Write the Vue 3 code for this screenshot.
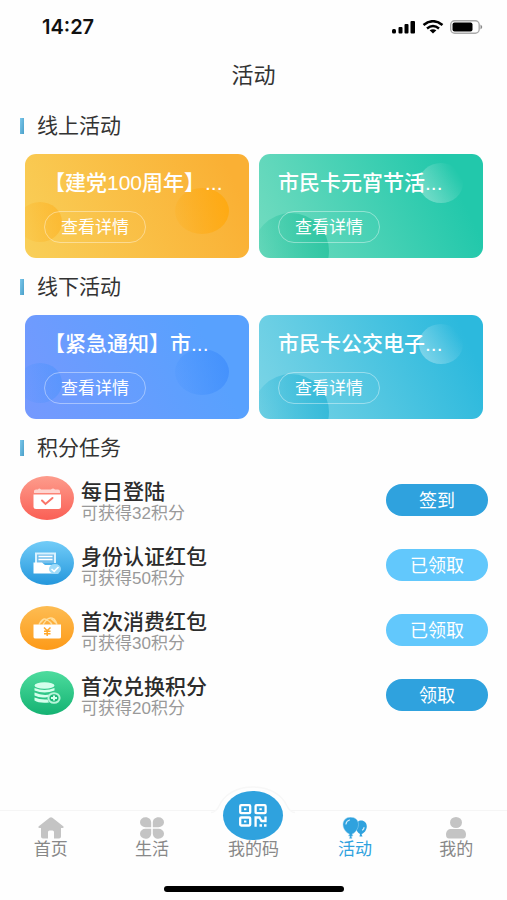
<script setup>
const sections = [
  {
    title: '线上活动',
    cards: [
      { title: '【建党100周年】...', theme: 'amber', shape: 'a' },
      { title: '市民卡元宵节活...', theme: 'green', shape: 'b' },
    ],
  },
  {
    title: '线下活动',
    cards: [
      { title: '【紧急通知】市...', theme: 'blue', shape: 'a' },
      { title: '市民卡公交电子...', theme: 'cyan', shape: 'b' },
    ],
  },
]

const tasks = [
  { icon: 'calendar', title: '每日登陆', points: 32, action: '签到', done: false, from: '#fd9c8c', to: '#fa5f55' },
  { icon: 'identity', title: '身份认证红包', points: 50, action: '已领取', done: true, from: '#72ccf8', to: '#2497dc' },
  { icon: 'bag', title: '首次消费红包', points: 30, action: '已领取', done: true, from: '#fdbc52', to: '#fd9a18' },
  { icon: 'coins', title: '首次兑换积分', points: 20, action: '领取', done: false, from: '#4ddc9e', to: '#14b272' },
]
</script>

<template>
  <div class="page">
    <header>
      <div class="status">
        <span class="time">14:27</span>
        <span class="signals">
          <svg width="24" height="14" viewBox="0 0 24 14" fill="#000">
            <rect x="0" y="9" width="4" height="4.500" rx="1.500" />
            <rect x="6.500" y="7" width="4" height="6.500" rx="1" />
            <rect x="12.500" y="4" width="4" height="9.500" rx="1" />
            <rect x="18.500" y="1" width="4.500" height="12.500" rx="1" />
          </svg>
          <svg width="22" height="14" viewBox="0 0 22 14" fill="none" stroke="#000">
            <path d="M1.500 5Q11-2.500 20.500 5" stroke-width="2.600" />
            <path d="M5 8.400Q11 3.600 17 8.400" stroke-width="2.500" />
            <path d="M7.600 10.300Q11 8 14.400 10.300L11 13.500Z" fill="#000" stroke="none" />
          </svg>
          <svg width="33" height="14" viewBox="0 0 33 14">
            <rect x="0.700" y="0.700" width="28.500" height="12.600" rx="4" fill="#fff" stroke="#aaa" stroke-width="1.400" />
            <rect x="2.500" y="2.500" width="20" height="9" rx="2" fill="#000" />
            <path d="M30.500 4.500Q34 7 30.500 9.500Z" fill="#888" />
          </svg>
        </span>
      </div>
      <h1>活动</h1>
    </header>

    <main>
      <section v-for="section in sections" :key="section.title">
        <h2>{{ section.title }}</h2>
        <div class="cards">
          <article v-for="card in section.cards" :key="card.title" class="card" :class="card.theme">
            <svg class="decor" viewBox="0 0 224 104" preserveAspectRatio="none" aria-hidden="true">
              <defs>
                <linearGradient :id="'shade-' + card.theme" x1="0" y1="0.600" x2="1" y2="0.400">
                  <stop offset="0" stop-color="var(--shape)" stop-opacity="0.150" />
                  <stop offset="1" stop-color="var(--shape)" stop-opacity="0.900" />
                </linearGradient>
                <linearGradient :id="'glow-' + card.theme" x1="0" y1="0.800" x2="1" y2="0.200">
                  <stop offset="0" stop-color="#fff" stop-opacity="0.350" />
                  <stop offset="0.900" stop-color="#fff" stop-opacity="0" />
                </linearGradient>
              </defs>
              <template v-if="card.shape === 'a'">
                <ellipse cx="177" cy="57" rx="27" ry="23" :fill="`url(#shade-${card.theme})`" />
                <ellipse cx="15" cy="68" rx="22" ry="20" opacity="0.500" :fill="`url(#shade-${card.theme})`" />
              </template>
              <template v-else>
                <ellipse cx="182" cy="29" rx="22" ry="20" :fill="`url(#glow-${card.theme})`" />
                <ellipse cx="32" cy="97" rx="38" ry="38" :fill="`url(#shade-${card.theme})`" />
              </template>
            </svg>
            <h3>{{ card.title }}</h3>
            <button type="button" class="detail">查看详情</button>
          </article>
        </div>
      </section>

      <section>
        <h2>积分任务</h2>
        <ul class="tasks">
          <li v-for="task in tasks" :key="task.icon">
            <svg class="badge" width="54" height="44" viewBox="0 0 54 44" aria-hidden="true">
              <defs>
                <linearGradient :id="'badge-' + task.icon" x1="0" y1="0" x2="0" y2="1">
                  <stop offset="0" :stop-color="task.from" />
                  <stop offset="1" :stop-color="task.to" />
                </linearGradient>
              </defs>
              <ellipse cx="27" cy="22" rx="27" ry="22" :fill="`url(#badge-${task.icon})`" />
              <g v-if="task.icon === 'calendar'">
                <path d="M14 16V15Q14 13.500 16 13.500H18Q19 11.500 21 13.500H31Q33 11.500 35 13.500H38Q40 13.500 40 15.500V17H14Z" fill="#fff" opacity="0.650" />
                <path d="M13.500 18.500H41V31Q41 33 38.500 33H16Q13.500 33 13.500 31Z" fill="#fff" />
                <path d="M22 24.500L25.500 28L32.500 22" fill="none" stroke="#fa7468" stroke-width="2" stroke-linecap="round" />
              </g>
              <g v-else-if="task.icon === 'identity'">
                <path d="M15 11.500H36V22H15Z" fill="#d9f2ff" />
                <path d="M17 13.500H34V22H17Z" fill="#74bfec" />
                <path d="M18.500 15.500H32.500M18.500 18.500H32.500" stroke="#fff" stroke-width="1.400" />
                <path d="M13.500 21.500H22L25 24H38.500V32.500H13.500Z" fill="#fff" />
                <ellipse cx="35" cy="28" rx="6" ry="5" fill="#9edbf9" />
                <path d="M31.500 28L34.200 30.300L38.500 26" fill="none" stroke="#fff" stroke-width="1.600" />
              </g>
              <g v-else-if="task.icon === 'bag'">
                <path d="M19 18.500Q22 11.500 26.500 13.500Q31 16 32 18.500M23 18.500Q28 9.500 34 13Q36 15 37 18.500M20 17L24 13M31 12.500L36 17" fill="none" stroke="#ffdf9e" stroke-width="1.400" />
                <path d="M13.500 18.500H41V31Q41 32.500 39 32.500H15.500Q13.500 32.500 13.500 31Z" fill="#fff" />
                <path d="M24 21.500L27.200 24.800L30.500 21.500M27.200 24.800V30M24 25.300H30.500M24 27.800H30.500" fill="none" stroke="#ffa82b" stroke-width="1.500" />
              </g>
              <g v-else>
                <ellipse cx="24.500" cy="14.500" rx="10" ry="3.200" fill="#d5ffec" />
                <path d="M14.500 17Q24.500 21 34.500 17V19.500Q24.500 23.500 14.500 19.500Z" fill="#d5ffec" />
                <path d="M14.500 21.500Q22 25 30 23.500Q28.500 25 28 26Q20 27.500 14.500 24.500Z" fill="#d5ffec" />
                <path d="M14.500 26.500Q20 29 27.500 28.500L29 31.500Q19 32.500 14.500 29.500Z" fill="#d5ffec" />
                <ellipse cx="34" cy="27" rx="5.600" ry="4.800" fill="#1db878" stroke="#b8f5da" stroke-width="2" />
                <path d="M31 27H37M34 24.500V29.500" stroke="#d5ffec" stroke-width="2" />
              </g>
            </svg>
            <div class="info">
              <h3>{{ task.title }}</h3>
              <p>可获得{{ task.points }}积分</p>
            </div>
            <button type="button" class="action" :class="{ done: task.done }">{{ task.action }}</button>
          </li>
        </ul>
      </section>
    </main>

    <footer>
      <nav>
        <a href="#home">
          <svg width="28" height="22" viewBox="0 0 28 22" fill="#c4c4c4">
            <path d="M12.600 0.700Q14 0 15.400 0.700L26.500 9.500Q27 11 25.500 11H24V19.500Q24 21.500 22 21.500H17V15Q17 13.500 15.500 13.500H12.500Q11 13.500 11 15V21.500H6Q4 21.500 4 19.500V11H2.500Q1 11 1.500 9.500Z" />
          </svg>
          <span>首页</span>
        </a>
        <a href="#life">
          <svg width="26" height="22" viewBox="0 0 26 22" fill="#c4c4c4">
            <path d="M12.200 10.200H6.500A5.500 5 0 0 1 6.500 0.200C10 0.200 12.200 2.500 12.200 5.500Z" />
            <path d="M13.800 10.200H19.500A5.500 5 0 0 0 19.500 0.200C16 0.200 13.800 2.500 13.800 5.500Z" />
            <path d="M12.200 11.800H6.500A5.500 5 0 0 0 6.500 21.800C10 21.800 12.200 19.500 12.200 16.500Z" />
            <path d="M13.800 11.800H19.500A5.500 5 0 0 1 19.500 21.800C16 21.800 13.800 19.500 13.800 16.500Z" />
          </svg>
          <span>生活</span>
        </a>
        <a href="#code" class="code">
          <svg class="bubble" width="84" height="54" viewBox="0 0 84 54" aria-hidden="true">
            <path d="M0 26.500Q5 26.500 8 20C13 9 25 1 42 1C59 1 71 9 76 20Q79 26.500 84 26.500V54H0Z" fill="#fefefe" />
            <path d="M0 26.500Q5 26.500 8 20C13 9 25 1 42 1C59 1 71 9 76 20Q79 26.500 84 26.500" fill="none" stroke="#f7f7f7" stroke-width="1.500" />
            <ellipse cx="42" cy="29.500" rx="30" ry="24.500" fill="#2fa2de" />
            <g fill="none" stroke="#fff" stroke-width="2.300">
              <rect x="29.200" y="19.200" width="10" height="8" rx="1" />
              <rect x="44.600" y="19.200" width="10" height="8" rx="1" />
              <rect x="29.200" y="31.500" width="10" height="8" rx="1" />
              <path d="M44.600 40.700V31.500H48.500L50.500 35H54.500V30.500" />
            </g>
            <g fill="#fff">
              <rect x="33" y="22.200" width="2.400" height="2" />
              <rect x="48.400" y="22.200" width="2.400" height="2" />
              <rect x="33" y="34.500" width="2.400" height="2" />
              <rect x="48.500" y="38.200" width="2.500" height="2.500" />
              <rect x="53" y="38.200" width="2.500" height="2.500" />
            </g>
          </svg>
          <span>我的码</span>
        </a>
        <a href="#activity" class="active" aria-current="page">
          <svg width="26" height="22" viewBox="0 0 26 22">
            <path d="M19 3.500C22.500 3.500 24.800 6 24.800 9.500C24.800 13 22 16.500 19.500 17L20.500 19.500H17.500L18 17Q14 15 14 9.500C14 6 16 3.500 19 3.500Z" fill="#2fa2de" />
            <path d="M8.500 0.200C13.500 0.200 16.500 3.300 16.500 7.500C16.500 12 12.500 16.500 10 17L11 19H9.500L10 21.500H7.500L8 19H6.500L7.500 17C4.500 16 1 12 1 7.500C1 3.300 4 0.200 8.500 0.200Z" fill="#2fa2de" stroke="#9fd4f0" stroke-width="0.500" />
            <path d="M4 7Q4.300 4 7.500 3M20.500 13Q22 12 22 10.500" fill="none" stroke="#d5eefa" stroke-width="1.200" stroke-linecap="round" />
          </svg>
          <span>活动</span>
        </a>
        <a href="#mine">
          <svg width="22" height="22" viewBox="0 0 22 22" fill="#c4c4c4">
            <ellipse cx="11" cy="5.500" rx="6" ry="5.500" />
            <path d="M6.500 12H15.500C19 12 21 14 21 17.500Q21 21.500 18 21.500H4Q1 21.500 1 17.500C1 14 3 12 6.500 12Z" />
          </svg>
          <span>我的</span>
        </a>
      </nav>
      <div class="indicator"></div>
    </footer>
  </div>
</template>

<style>
body {
  margin: 0;
  background: #fefefe;
}
</style>

<style scoped>
.page {
  display: flex;
  flex-direction: column;
  min-height: 100vh;
  color: #333;
  font-family: "Liberation Sans", "Noto Sans CJK SC", sans-serif;
}

h1,
h2,
h3,
p,
ul {
  margin: 0;
  padding: 0;
  font-weight: 400;
}

button {
  padding: 0;
  font-family: inherit;
  cursor: pointer;
}

.status {
  display: flex;
  align-items: center;
  justify-content: space-between;
  height: 54px;
  padding: 0 24px 0 42px;
}

.time {
  color: #111;
  font: 600 20px/24px Inter, sans-serif;
}

.signals {
  display: flex;
  gap: 6px;
}

h1 {
  font-size: 22px;
  line-height: 44px;
  text-align: center;
}

main {
  flex: 1;
  padding: 12px 19px 12px 20px;
}

h2 {
  display: flex;
  align-items: center;
  gap: 13px;
  font-size: 21px;
  line-height: 32px;
}

h2::before {
  width: 4px;
  height: 16px;
  background: linear-gradient(100deg, #7cc8ec, #4a9fc8);
  content: "";
}

.cards {
  display: grid;
  grid-template-columns: 1fr 1fr;
  gap: 10px;
  padding: 12px 5px 13px;
}

.card {
  position: relative;
  display: flex;
  flex-direction: column;
  align-items: flex-start;
  gap: 12px;
  min-width: 0;
  padding: 13px 19px 15px;
  overflow: hidden;
  border-radius: 11px;
  color: #fff;
}

.amber {
  --shape: #ffa90f;
  background: linear-gradient(65deg, #f9cf58, #fab034 90%);
}

.green {
  --shape: #2bc4a0;
  background: linear-gradient(65deg, #74dcc0, #22c8ab 85%);
}

.blue {
  --shape: #4390fc;
  background: linear-gradient(65deg, #7599fe, #58a1fe 80%);
}

.cyan {
  --shape: #31b8d8;
  background: linear-gradient(65deg, #7dd5e6, #2cb9dd 90%);
}

.decor {
  position: absolute;
  inset: 0;
  width: 100%;
  height: 100%;
}

.card h3 {
  position: relative;
  max-width: 100%;
  font-size: 21px;
  font-weight: 500;
  line-height: 32px;
  white-space: nowrap;
}

.detail {
  position: relative;
  width: 102px;
  height: 32px;
  padding-top: 2px;
  border: 1px solid rgba(255, 255, 255, 0.4);
  border-radius: 16px;
  background: transparent;
  color: #fff;
  font-size: 17px;
  line-height: 28px;
}

.tasks {
  display: grid;
  gap: 17px;
  padding-top: 12px;
  list-style: none;
}

.tasks li {
  display: flex;
  align-items: center;
  height: 48px;
}

.badge {
  flex: none;
  align-self: flex-start;
}

.info {
  flex: 1;
  padding: 4px 0 0 7px;
}

.info h3 {
  color: #2c2c2c;
  font-size: 21px;
  font-weight: 500;
  line-height: 24px;
}

.info p {
  color: #999;
  font-size: 17px;
  line-height: 20px;
}

.action {
  width: 102px;
  height: 32px;
  padding-top: 2px;
  border: 0;
  border-radius: 16px;
  background: #2fa2de;
  color: #fff;
  font-size: 18px;
  line-height: 30px;
}

.action.done {
  background: #62c8fc;
}

nav {
  display: grid;
  grid-template-columns: repeat(5, 1fr);
  height: 75px;
  border-top: 1px solid #f5f5f5;
}

nav a {
  position: relative;
  display: flex;
  flex-direction: column;
  align-items: center;
  padding-top: 6px;
  color: #888;
  font-size: 17px;
  line-height: 22px;
  text-decoration: none;
}

nav .active {
  color: #2fa2de;
}

nav .code {
  padding-top: 28px;
}

.bubble {
  position: absolute;
  bottom: 46px;
}

.code span {
  position: relative;
}

.indicator {
  width: 180px;
  height: 6px;
  margin: 0 auto 8px;
  border-radius: 3px;
  background: #000;
}
</style>
